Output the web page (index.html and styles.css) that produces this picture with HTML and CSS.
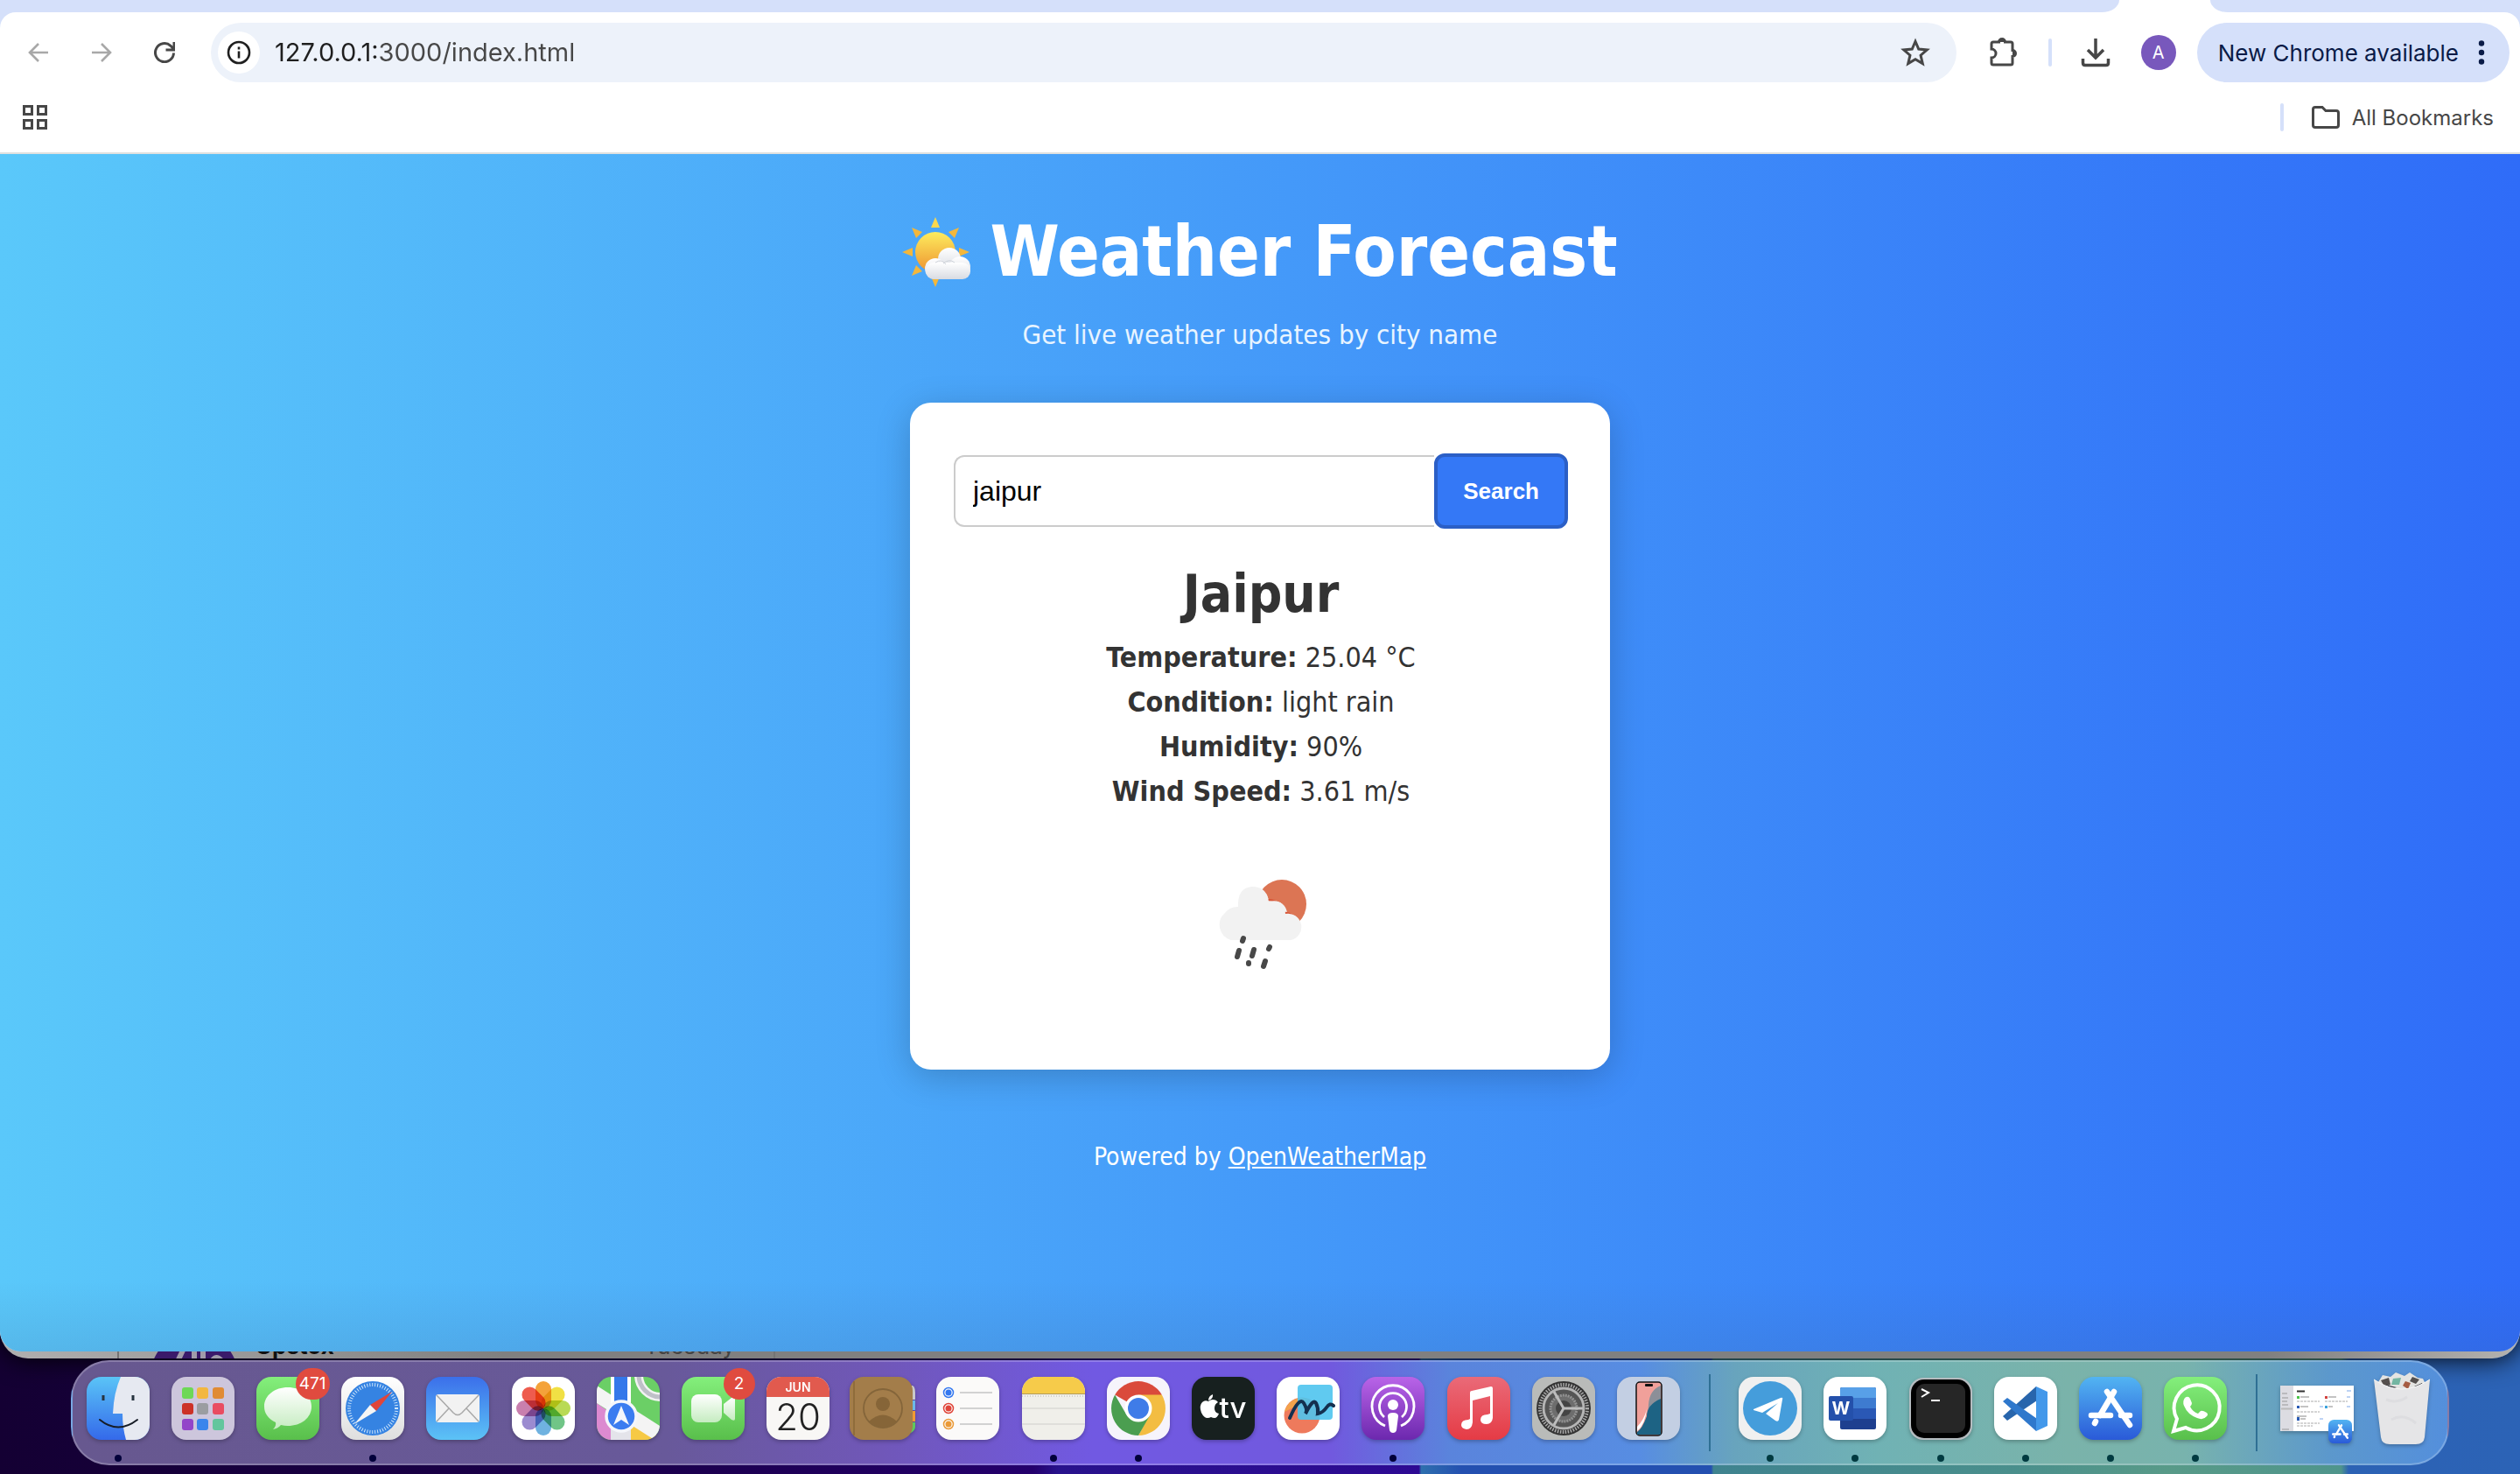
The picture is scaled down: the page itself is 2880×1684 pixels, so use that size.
FILE: index.html
```html
<!DOCTYPE html>
<html lang="en">
<head>
<meta charset="utf-8">
<meta name="viewport" content="width=device-width, initial-scale=1">
<title>Weather Forecast</title>
<link rel="stylesheet" href="styles.css">
</head>
<body>
<div class="desktop">
  <div class="back-window">
    <div class="peek" aria-hidden="true">
      <div class="peek-list">
        <span class="peek-avatar"><svg viewBox="0 0 100 100"><circle cx="50" cy="50" r="50" fill="#3a1a6a"/><path d="M42 10L26 44M50 8V46M60 8V46M66 44Q74 14 88 44" stroke="#a09caa" stroke-width="6" fill="none"/></svg></span>
        <span class="peek-name">Upstox</span>
        <span class="peek-day">Tuesday</span>
      </div>
    </div>
    <div class="browser">
      <div class="tabs"><span class="tabs-left"></span><span class="tab-active"></span><span class="tabs-right"></span></div>
      <div class="chrome-bars">
        <div class="toolbar">
          <div class="nav">
            <button class="icon-btn muted" aria-label="Back"><svg viewBox="0 0 24 24"><path d="M23 12H2M12 2L2 12l10 10"/></svg></button>
            <button class="icon-btn muted" aria-label="Forward"><svg viewBox="0 0 24 24"><path d="M1 12h21M12 2l10 10-10 10"/></svg></button>
            <button class="icon-btn" aria-label="Reload"><svg viewBox="0 0 24 24"><path d="M22.500 12.500A10.500 10.500 0 1 1 19 4.300L22 7.500M23 0v9h-9.500" stroke-width="3"/></svg></button>
          </div>
          <div class="omnibox">
            <button class="site-info" aria-label="Site information"><svg viewBox="0 0 28 28"><circle cx="14" cy="14" r="12" fill="none" stroke="#1f1f1f" stroke-width="2.600"/><path d="M14 12.500v8M14 7.500v3" stroke="#1f1f1f" stroke-width="2.600"/></svg></button>
            <input class="url" type="text" value="127.0.0.1:3000/index.html" aria-label="Address">
            <button class="star" aria-label="Bookmark this page"><svg viewBox="0 0 32 32"><path d="M16 4l3.500 8.300 9 .8-6.800 5.900 2.100 8.900L16 23.200l-7.800 4.700 2.100-8.900L3.500 13.100l9-.8z" fill="none" stroke="#474747" stroke-width="2.800"/></svg></button>
          </div>
          <div class="tools">
            <button class="tool" aria-label="Extensions"><svg viewBox="0 0 36 36"><path d="M4 8q0-2 2-2h6.500a3.500 3.500 0 0 1 7 0H26q2 0 2 2v7.500a3.500 3.500 0 0 1 0 7V30q0 2-2 2H6q-2 0-2-2v-6a5 5 0 0 0 0-10z" fill="none" stroke="#474747" stroke-width="3"/><path d="M12.500 6a3.500 3.500 0 0 1 7 0zM28 15.500a3.500 3.500 0 0 1 0 7z" fill="#474747"/></svg></button>
            <span class="bar"></span>
            <button class="tool" aria-label="Downloads"><svg viewBox="0 0 36 36"><path d="M18 2v22M9 15l9 9 9-9M3.500 25v5q0 2.500 2.500 2.500h24q2.500 0 2.500-2.500v-5" fill="none" stroke="#474747" stroke-width="3.500"/></svg></button>
            <button class="avatar" aria-label="Profile">A</button>
          </div>
          <button class="update"><span>New Chrome available</span><svg viewBox="0 0 8 28"><circle cx="4" cy="3.500" r="3.200"/><circle cx="4" cy="14" r="3.200"/><circle cx="4" cy="24.500" r="3.200"/></svg></button>
        </div>
        <div class="bookmarks">
          <button class="apps" aria-label="Apps"><svg viewBox="0 0 28 28"><path d="M1.500 1.500h9v9h-9zM17.500 1.500h9v9h-9zM1.500 17.500h9v9h-9zM17.500 17.500h9v9h-9z" fill="none" stroke="#474747" stroke-width="3"/></svg></button>
          <div class="all-marks">
            <span class="bar"></span>
            <button class="folder"><svg viewBox="0 0 32 26"><path d="M1.500 4q0-2.500 2.500-2.500h8l4 4h12q2.500 0 2.500 2.500v14q0 2.500-2.500 2.500H4q-2.500 0-2.500-2.500z" fill="none" stroke="#474747" stroke-width="3"/></svg>All Bookmarks</button>
          </div>
        </div>
      </div>
      <div class="page">
        <header class="hero">
          <h1><svg class="sun" viewBox="0 0 80 80"><defs><linearGradient id="sg" x1="0" y1="0" x2="0" y2="1"><stop offset="0" stop-color="#fdec5e"/><stop offset="1" stop-color="#ee9330"/></linearGradient><linearGradient id="cg" x1="0" y1="0" x2="0" y2="1"><stop offset="0" stop-color="#fff"/><stop offset="1" stop-color="#d8dbe2"/></linearGradient></defs><g fill="#f3b73c"><path d="M38 0l5 12H33z" fill="#fbd84f"/><path d="M38 80l5-12H33zM0 40l12-5v10zM77 40l-12-5v10zM11 12l12 5-7 7zM65 12l-12 5 7 7zM11 67l12-5-7-7z"/></g><circle cx="38" cy="40" r="23" fill="url(#sg)"/><g fill="url(#cg)"><circle cx="54" cy="48" r="13"/><circle cx="38" cy="59" r="12"/><circle cx="66" cy="57" r="12"/><rect x="27" y="52" width="51" height="19" rx="9"/></g><path d="M38 52q7-5 12 2M47 53q7-6 13-1" fill="none" stroke="#cfd3da" stroke-width="1"/></svg>Weather Forecast</h1>
          <p>Get live weather updates by city name</p>
        </header>
        <main class="card">
          <form class="search" onsubmit="return false">
            <input type="text" value="jaipur" aria-label="City name">
            <button type="submit">Search</button>
          </form>
          <section class="result">
            <h2>Jaipur</h2>
            <p><strong>Temperature:</strong> 25.04 °C</p>
            <p><strong>Condition:</strong> light rain</p>
            <p><strong>Humidity:</strong> 90%</p>
            <p><strong>Wind Speed:</strong> 3.61 m/s</p>
            <svg class="rain" viewBox="0 0 200 200" role="img" aria-label="Light rain"><circle cx="124" cy="72" r="28" fill="#dc7554"/><path d="M66 113a18 18 0 0 1-6-30a18 18 0 0 1 14-5q0-22 17-22q16 0 18 12q19-1 21 14q10 1 13 10l-9 20z" fill="#f2f2f2"/><path d="M102 69q15-7 24 12M126 82q8-1 13 6" fill="none" stroke="#d8583a" stroke-width="2"/><path d="M66 113a18 18 0 0 1-7-31a18 18 0 0 1 15-7q-1-22 16-23q17 0 19 17q18-4 19 14a15 15 0 0 1 6 30z" fill="#f2f2f2"/><path d="M80 111l-1 3M75 125l-2 7M92 124l-2 7M110 121l-1 2M86 139v1M105 137l-2 6" stroke="#484848" stroke-width="6" stroke-linecap="round"/></svg>
          </section>
        </main>
        <footer class="credit">Powered by <a href="#">OpenWeatherMap</a></footer>
      </div>
    </div>
  </div>

  <svg class="defs" width="0" height="0" aria-hidden="true"><defs>
    <linearGradient id="blue" x1="0" y1="0" x2="0" y2="1"><stop offset="0" stop-color="#5ac4f7"/><stop offset="1" stop-color="#3469ea"/></linearGradient>
    <linearGradient id="mailg" x1="0" y1="0" x2="0" y2="1"><stop offset="0" stop-color="#3b6fea"/><stop offset="1" stop-color="#5cc3f6"/></linearGradient>
    <linearGradient id="green" x1="0" y1="0" x2="0" y2="1"><stop offset="0" stop-color="#84ef7c"/><stop offset="1" stop-color="#59bf4b"/></linearGradient>
    <linearGradient id="paper" x1="0" y1="0" x2="0" y2="1"><stop offset="0" stop-color="#fff"/><stop offset="1" stop-color="#dedede"/></linearGradient>
    <linearGradient id="glass" x1="0" y1="0" x2="0" y2="1"><stop offset="0" stop-color="#fff"/><stop offset="1" stop-color="#c5ecc0"/></linearGradient>
    <linearGradient id="store" x1="0" y1="0" x2="0" y2="1"><stop offset="0" stop-color="#52b4f2"/><stop offset="1" stop-color="#2a5ad8"/></linearGradient>
    <linearGradient id="pod" x1="0" y1="0" x2="0" y2="1"><stop offset="0" stop-color="#b964e8"/><stop offset="1" stop-color="#6c28ae"/></linearGradient>
    <linearGradient id="mus" x1="0" y1="0" x2="0" y2="1"><stop offset="0" stop-color="#ea6a78"/><stop offset="1" stop-color="#e53b45"/></linearGradient>
    <clipPath id="tile"><rect width="72" height="72" rx="17"/></clipPath>
    <symbol id="astore" viewBox="0 0 72 72"><rect width="72" height="72" rx="17" fill="url(#store)"/><g stroke="#fff" stroke-width="6.500" stroke-linecap="round"><path d="M40 17L24 44M18 53l1-2"/><path d="M32 17l26 38"/><path d="M14 44h22M48 44h10"/></g></symbol>
  </defs></svg>

  <nav class="dock" aria-label="Dock">
    <button class="app running" aria-label="Finder"><svg viewBox="0 0 72 72"><g clip-path="url(#tile)"><rect width="72" height="72" fill="url(#blue)"/><path d="M39 0Q31 18 30 42h11q0 16 4 30h27V0z" fill="#e6e9f1"/></g><path d="M19 21v6M53 21v6" stroke="#27333f" stroke-width="3"/><path d="M15 49q21 17 43 0" fill="none" stroke="#161c26" stroke-width="2" stroke-linecap="round"/></svg></button>
    <button class="app" aria-label="Launchpad"><svg viewBox="0 0 72 72"><rect width="72" height="72" rx="17" fill="#cdc6dc"/><rect x="12" y="12" width="13" height="13" rx="3" fill="#6dd856"/><rect x="29" y="12" width="13" height="13" rx="3" fill="#f2b740"/><rect x="47" y="12" width="13" height="13" rx="3" fill="#e08b35"/><rect x="12" y="30" width="13" height="13" rx="3" fill="#cc3127"/><rect x="29" y="30" width="13" height="13" rx="3" fill="#9b9da1"/><rect x="47" y="30" width="13" height="13" rx="3" fill="#e94c61"/><rect x="12" y="48" width="13" height="13" rx="3" fill="#9345c9"/><rect x="29" y="48" width="13" height="13" rx="3" fill="#3b85ec"/><rect x="47" y="48" width="13" height="13" rx="3" fill="#62c69d"/></svg></button>
    <button class="app" aria-label="Messages"><svg viewBox="0 0 72 72"><rect width="72" height="72" rx="17" fill="url(#green)"/><path d="M36 12c15 0 27 9 27 22s-12 22-27 22q-4 0-8-1-3 4-9 5 4-4 3-8C14 48 9 42 9 34c0-13 12-22 27-22z" fill="url(#glass)"/></svg><span class="badge">471</span></button>
    <button class="app running" aria-label="Safari"><svg viewBox="0 0 72 72"><rect width="72" height="72" rx="17" fill="url(#paper)"/><circle cx="36" cy="36" r="31" fill="#3583e2"/><circle cx="36" cy="36" r="27" fill="none" stroke="#cfe6fb" stroke-width="4" stroke-dasharray="1 2"/><path d="M58 17L40 39 33 32z" fill="#e0453a"/><path d="M15 54l18-22 7 7z" fill="#f5f5f5"/></svg></button>
    <button class="app" aria-label="Mail"><svg viewBox="0 0 72 72"><rect width="72" height="72" rx="17" fill="url(#mailg)"/><rect x="11" y="20" width="50" height="32" rx="3" fill="#f2f2f2"/><path d="M12 51l14-15M60 51L46 36M12 21l19 20q5 5 10 0l19-20" fill="none" stroke="#a9a9a9" stroke-width="1.500"/></svg></button>
    <button class="app" aria-label="Photos"><svg viewBox="0 0 72 72"><rect width="72" height="72" rx="17" fill="#fff"/><g class="petals"><rect x="27" y="5" width="18" height="31" rx="9" fill="#f4a23a"/><rect x="27" y="5" width="18" height="31" rx="9" fill="#f1e044" transform="rotate(45 36 36)"/><rect x="27" y="5" width="18" height="31" rx="9" fill="#b9da55" transform="rotate(90 36 36)"/><rect x="27" y="5" width="18" height="31" rx="9" fill="#70c587" transform="rotate(135 36 36)"/><rect x="27" y="5" width="18" height="31" rx="9" fill="#6fb2e0" transform="rotate(180 36 36)"/><rect x="27" y="5" width="18" height="31" rx="9" fill="#9b8bd0" transform="rotate(225 36 36)"/><rect x="27" y="5" width="18" height="31" rx="9" fill="#c97fae" transform="rotate(270 36 36)"/><rect x="27" y="5" width="18" height="31" rx="9" fill="#ee5c4e" transform="rotate(315 36 36)"/></g></svg></button>
    <button class="app" aria-label="Maps"><svg viewBox="0 0 72 72"><g clip-path="url(#tile)"><rect width="72" height="72" fill="#6bcf66"/><path d="M0 30l20 14v28H0z" fill="#dc8ad0"/><path d="M38 72V48l34 20v4z" fill="#f6c945"/><path d="M0 10l72 46v16H66L0 30z" fill="#f4f4f4"/><path d="M16 40h23v32H16z" fill="#e4e4ea"/><path d="M16 0h23v40H16z" fill="#fff"/><path d="M20 0h15v40H20z" fill="#3478ea"/><circle cx="73" cy="-2" r="25" fill="none" stroke="#f2f2f2" stroke-width="10"/><circle cx="73" cy="-2" r="25" fill="none" stroke="#bfc0c8" stroke-width="5"/></g><circle cx="28" cy="45" r="17" fill="#3b7cf0" stroke="#f4f6fb" stroke-width="3.500"/><path d="M28 33l9 22-9-6-9 6z" fill="#f4f6fb"/></svg></button>
    <button class="app" aria-label="FaceTime"><svg viewBox="0 0 72 72"><rect width="72" height="72" rx="17" fill="url(#green)"/><rect x="11" y="20" width="35" height="32" rx="8" fill="url(#glass)"/><path d="M48 31l9-7q4-2 4 1v23q0 3-4 1l-9-8z" fill="url(#glass)"/></svg><span class="badge">2</span></button>
    <button class="app" aria-label="Calendar"><svg viewBox="0 0 72 72"><g clip-path="url(#tile)"><rect width="72" height="72" fill="#f8f7f5"/><rect width="72" height="23" fill="#e15a4e"/></g><text x="36" y="17" class="t jun">JUN</text><text x="36" y="61" class="t day">20</text></svg></button>
    <button class="app" aria-label="Contacts"><svg viewBox="0 0 76 72"><path d="M66 10h6q3 2 3 8v8h-9z" fill="#c9c9c9"/><path d="M66 27h9v11h-9z" fill="#6cb8e8"/><path d="M66 39h9v12h-9z" fill="#f09a33"/><path d="M66 52h9v5q0 4-5 7h-4z" fill="#5fc85c"/><rect width="72" height="72" rx="16" fill="#a37d4a"/><path d="M5 5v62" stroke="#886737" stroke-width="1.500"/><circle cx="38" cy="36" r="22" fill="none" stroke="#84653a" stroke-width="1.800"/><circle cx="38" cy="31" r="8" fill="#866538"/><path d="M22 51q16-15 32 0-16 14-32 0z" fill="#866538"/></svg></button>
    <button class="app" aria-label="Reminders"><svg viewBox="0 0 72 72"><rect width="72" height="72" rx="17" fill="#fbfaf9"/><g fill="none" stroke-width="1.500"><circle cx="14" cy="18" r="5.500" stroke="#3478f0"/><circle cx="14" cy="36" r="5.500" stroke="#e0453a"/><circle cx="14" cy="54" r="5.500" stroke="#ea9a38"/></g><circle cx="14" cy="18" r="3.500" fill="#3478f0"/><circle cx="14" cy="36" r="3.500" fill="#e0453a"/><circle cx="14" cy="54" r="3.500" fill="#ea9a38"/><path d="M27 18h37M27 36h37M27 54h37" stroke="#c5c5c5" stroke-width="1.600"/></svg></button>
    <button class="app running" aria-label="Notes"><svg viewBox="0 0 72 72"><g clip-path="url(#tile)"><rect width="72" height="72" fill="#f0efea"/><rect width="72" height="19" fill="#f6cb4a"/><path d="M0 19.500h72" stroke="#b39a5a"/><path d="M0 22h72" stroke="#b5b5b0" stroke-dasharray="1 2"/><path d="M0 36h72M0 54h72" stroke="#cfcecb"/></g></svg></button>
    <button class="app running" aria-label="Chrome"><svg viewBox="0 0 72 72"><rect width="72" height="72" rx="17" fill="#f6f4fb"/><path d="M36 36L9.200 20.500A31 31 0 0 1 62.800 20.500z" fill="#da4a3b"/><path d="M36 20.500H62.800A31 31 0 0 1 36 67L49 43z" fill="#f3bd42"/><path d="M9.200 20.500A31 31 0 0 0 36 67L49.500 43.500 22.500 43.500z" fill="#4b9e50"/><circle cx="36" cy="36" r="15.500" fill="#fff"/><circle cx="36" cy="36" r="12" fill="#3f7ce8"/></svg></button>
    <button class="app" aria-label="Apple TV"><svg viewBox="0 0 72 72"><rect width="72" height="72" rx="17" fill="#17201f"/><path d="M20 29q2-2 5-2 4 0 6 3-4 2-4 7t5 6q-2 5-5 5-2 0-4-1-2 1-4 1-4 0-7-6-3-8 1-12 3-3 7-1zM20 28q0-5 5-7 1 5-5 7z" fill="#fff" transform="translate(-1 -1)"/><text x="47" y="47" class="t tv">tv</text></svg></button>
    <button class="app" aria-label="Freeform"><svg viewBox="0 0 72 72"><rect width="72" height="72" rx="17" fill="#fff"/><circle cx="29" cy="44" r="20.500" fill="#ee7a5c"/><path d="M9 40a20 20 0 0 1 28-14z" fill="#f3a24b"/><rect x="24" y="9" width="40" height="40" rx="4" fill="#4fc4ee" opacity=".9"/><path d="M15 47Q26 22 31 30T33 42Q42 24 45 30T47 42Q53 41 57 35T65 33" fill="none" stroke="#14304f" stroke-width="4" stroke-linecap="round"/></svg></button>
    <button class="app running" aria-label="Podcasts"><svg viewBox="0 0 72 72"><rect width="72" height="72" rx="17" fill="url(#pod)"/><g fill="none" stroke="#fff" stroke-width="2.800"><path d="M27 56a24 24 0 1 1 18 0"/><path d="M26 46a15.500 15.500 0 1 1 20 0"/></g><circle cx="36" cy="32" r="6" fill="#fff"/><path d="M30 45q0-4 6-4t6 4l-2 16q-1 3-4 3t-4-3z" fill="#fff"/></svg></button>
    <button class="app" aria-label="Music"><svg viewBox="0 0 72 72"><rect width="72" height="72" rx="17" fill="url(#mus)"/><path d="M26 18q0-2 2-2l22-5q2 0 2 2v34q-1 7-7 7-7 0-7-5 0-6 8-6l3-1V22l-20 5v25q-1 8-7 8-6-1-6-5 0-6 8-6l2-1z" fill="#fff"/></svg></button>
    <button class="app" aria-label="System Settings"><svg viewBox="0 0 72 72"><rect width="72" height="72" rx="17" fill="#b9bbb9"/><circle cx="36" cy="36" r="31" fill="#333"/><circle cx="36" cy="36" r="27" fill="none" stroke="#aaa" stroke-width="4" stroke-dasharray="1.500 1.500"/><circle cx="36" cy="36" r="23" fill="#555" stroke="#b5b5b5" stroke-width="3"/><circle cx="36" cy="36" r="15" fill="#6d6d6d" stroke="#929292" stroke-width="3" stroke-dasharray="2 1"/><circle cx="36" cy="36" r="9" fill="#444"/><path d="M36 36h22M36 36L25 17M36 36L25 55" stroke="#bdbdbd" stroke-width="3"/></svg></button>
    <button class="app" aria-label="iPhone Mirroring"><svg viewBox="0 0 72 72"><rect width="72" height="72" rx="17" fill="#c3cfe3"/><rect x="22" y="6" width="29" height="61" rx="4" fill="#f0a09a" stroke="#111" stroke-width="1.500"/><path d="M50 10q-13 5-14 22l-1 12 15-10z" fill="#8c8f98"/><path d="M50 25Q34 32 34 45q-5 14-11 18v3h27z" fill="#1d6384"/><path d="M34 37q-3 12-11 20v5q9-7 11-25z" fill="#fff"/><rect x="32" y="8" width="9" height="3" rx="1" fill="#111"/></svg></button>
    <span class="divider"></span>
    <button class="app running" aria-label="Telegram"><svg viewBox="0 0 72 72"><rect width="72" height="72" rx="17" fill="#f0f0f0"/><circle cx="36" cy="36" r="31" fill="#459ddb"/><path d="M17 37l31-13q3-1 2 2l-4 23q-1 3-4 1L31 42l14-12-18 11-10-3z" fill="#fff"/></svg></button>
    <button class="app running" aria-label="Word"><svg viewBox="0 0 72 72"><rect width="72" height="72" rx="17" fill="#fff"/><rect x="19" y="12" width="41" height="48" rx="2" fill="#1e3f8f"/><path d="M19 36h41v12H19z" fill="#2a58b5"/><path d="M19 24h41v12H19z" fill="#3e7bd0"/><path d="M19 14q0-2 2-2h37q2 0 2 2v10H19z" fill="#58a0e8"/><rect x="6" y="22" width="28" height="28" rx="2" fill="#2450ab"/><text x="20" y="43" class="t word">W</text></svg></button>
    <button class="app running" aria-label="Terminal"><svg viewBox="0 0 72 72"><rect y="1" width="72" height="71" rx="16" fill="#b5bcc0"/><rect x="2" y="3" width="68" height="67" rx="15" fill="#000"/><rect x="8" y="8" width="56" height="56" rx="9" fill="#262626"/><path d="M14 14l8 4-8 5" fill="none" stroke="#fff" stroke-width="2"/><path d="M25 27h10" stroke="#fff" stroke-width="2"/></svg></button>
    <button class="app running" aria-label="Visual Studio Code"><svg viewBox="0 0 72 72"><rect width="72" height="72" rx="17" fill="#fff"/><path d="M10 45l38-34 4 14-37 25z" fill="#2865ac"/><path d="M10 28l5-4 37 26-4 12z" fill="#2f78cc"/><path d="M48 11l13 6v39l-13 6z" fill="#4398ea"/></svg></button>
    <button class="app running" aria-label="App Store"><svg viewBox="0 0 72 72"><use href="#astore"/></svg></button>
    <button class="app running" aria-label="WhatsApp"><svg viewBox="0 0 72 72"><rect width="72" height="72" rx="17" fill="url(#green)"/><path d="M11 62l4-14a26 26 0 1 1 10 10z" fill="none" stroke="#fff" stroke-width="4"/><path d="M24 24q4-3 6 1l2 5q0 2-2 4 3 6 9 8l3-3q2-1 7 2 2 2 0 4-4 5-11 2-11-4-15-14-2-5 1-9z" fill="#fff"/></svg></button>
    <span class="divider"></span>
    <button class="app" aria-label="App Store window"><svg class="thumb" viewBox="0 0 84 72"><rect y="10" width="84" height="52" fill="#fff"/><rect y="10" width="15" height="52" fill="#dcdce2"/><path d="M2 19h6M2 24h7M2 28h6M2 32h7M2 60h8" stroke="#999"/><path d="M1 36.500h13" stroke="#bbb" stroke-width="2"/><path d="M19 16.500h9" stroke="#333" stroke-width="2"/><path d="M23 23h10M55 23h9M23 34h9M55 34h5M19 45h11M23 48h6" stroke="#888"/><path d="M19 28h26M51 28h26M19 40h26M19 53h26M19 56h18" stroke="#aaa" stroke-dasharray="3 1"/><path d="M76 16h5M76 23h4M76 34h4M45 34h4M45 48h4" stroke="#7fa8ea"/><path d="M19 22h3v3h-3z" fill="#4cc44a"/><path d="M51 22h3v3h-3z" fill="#d24340"/><path d="M19 33h3v3h-3zM19 46h3v4h-3z" fill="#2a5ab5"/><path d="M51 33h3v3h-3z" fill="#3ba2dc"/><use href="#astore" x="55" y="49" width="27" height="27"/></svg></button>
    <button class="app" aria-label="Trash"><svg class="trash" viewBox="0 0 64 84"><path d="M5 12l5-8 9 2 6-5 10 4 6-4 9 6 6 1 5 10-5 8H8z" fill="#e4e4e2"/><path d="M8 10l9-3 2 8-7 2zM44 6l8 3-4 5-7-3z" fill="#55504e"/><path d="M22 8l9-1-2 8h-9z" fill="#73b6a2"/><path d="M36 11l6 2-3 7-6-4z" fill="#a65d43"/><path d="M14 15l12 3-6 2zM46 17l9-4 2 5z" fill="#3c3d44"/><path d="M0 9q32 22 64 0l-6 66q-1 8-10 8H18q-9 0-10-8z" fill="#e5e5e7"/><path d="M0 9q32 22 64 0" fill="none" stroke="#f8f8f8"/><path d="M14 32q12 5 24-3M20 55q14-8 28 4" stroke="#dddde0" stroke-width="3" fill="none"/></svg></button>
  </nav>
</div>
</body>
</html>
```
FILE: styles.css
```css
* { box-sizing: border-box; }

body {
  margin: 0;
  font-family: Inter, "Liberation Sans", sans-serif;
  color: #1f1f1f;
}

button {
  border: 0;
  padding: 0;
  background: none;
  font: inherit;
  color: inherit;
}

svg { display: block; }

.defs { position: absolute; }

.desktop {
  min-height: 100vh;
  display: flex;
  flex-direction: column;
  background:
    linear-gradient(to right, #140033 0%, #1c0050 28%, #24006c 41%, #28128c 42%, #2d0a93 56.300%, #2e6fae 56.400%, #2450b0 58%, #2450b0 67.900%, #3f838f 68%, #4a8f8c 80%, #589a88 86%, #4f958c 92.900%, #2c62b4 93.200%, #2c63b6 100%);
}

/* Window that sits behind the browser */
.back-window {
  position: relative;
  z-index: 0;
  flex: 1;
  display: flex;
  padding-bottom: 8px;
  border-radius: 0 0 32px 32px;
  background: linear-gradient(to right, #b0b0b0, #808080 20%, #808080 90%, #b5b3b0);
  box-shadow: 0 0 30px #000;
}

.peek {
  position: absolute;
  inset: auto 0 0 0;
  height: 40px;
  overflow: hidden;
}

.peek-list {
  width: 752px;
  height: 40px;
  margin-left: 134px;
  padding-right: 44px;
  display: flex;
  border: solid #747474;
  border-width: 0 2px;
}

.peek-avatar {
  width: 100px;
  margin: 10px 20px 0 36px;
}

.peek-name,
.peek-day {
  font-size: 26px;
  line-height: 52px;
}

.peek-name { font-weight: 700; color: #111; }
.peek-day { margin-left: auto; color: #444; }

/* Browser */
.browser {
  position: relative;
  flex: 1;
  display: flex;
  flex-direction: column;
  overflow: hidden;
  border-radius: 0 0 24px 24px;
  background: #d5e0fa;
}

.tabs {
  height: 14px;
  display: flex;
  background: #fff;
}

.tabs-left,
.tabs-right { background: #d5e0fa; }

.tabs-left { flex: 1; border-bottom-right-radius: 20px 14px; }
.tabs-right { width: 354px; border-bottom-left-radius: 20px 14px; }
.tab-active { width: 104px; }

.chrome-bars {
  border-radius: 18px 18px 0 0;
  border-bottom: 2px solid #dfe1e0;
  background: #fff;
}

.toolbar {
  display: flex;
  align-items: center;
  padding: 12px 12px 0 32px;
}

.nav {
  display: flex;
  gap: 48px;
  margin-right: 41px;
}

.icon-btn { width: 24px; height: 24px; }

.icon-btn svg {
  fill: none;
  stroke: #474747;
  stroke-width: 2.600;
}

.muted svg { stroke: #a8a8a8; }

.omnibox {
  flex: 1;
  height: 68px;
  display: flex;
  align-items: center;
  padding: 0 30px 0 8px;
  border-radius: 34px;
  background: #edf2fa;
}

.site-info {
  width: 48px;
  height: 48px;
  display: grid;
  place-items: center;
  border-radius: 50%;
  background: #fff;
}

.site-info svg { width: 28px; }

.url {
  flex: 1;
  min-width: 0;
  margin-left: 17px;
  padding: 0;
  border: 0;
  outline: 0;
  font: 29px/36px Inter, sans-serif;
  color: transparent;
  background: linear-gradient(to right, #1f1f1f 119px, #474747 119px);
  background-clip: text;
}

.star svg { width: 34px; }

.tools {
  display: flex;
  align-items: center;
  margin: 0 24px 0 36px;
}

.tool svg { width: 36px; }

.bar {
  width: 4px;
  height: 32px;
  border-radius: 2px;
  background: #d5e0fa;
}

.tools .bar { margin: 0 32px 0 33px; }

.avatar {
  width: 40px;
  height: 40px;
  margin-left: 34px;
  border-radius: 50%;
  background: #7858bc;
  color: #fff;
  font-size: 20px;
}

.update {
  height: 68px;
  display: flex;
  align-items: center;
  gap: 22px;
  padding: 0 28px 0 24px;
  border-radius: 34px;
  background: #d5e0fa;
  color: #0a1b47;
  fill: #0a1b47;
  font-size: 26px;
}

.update svg { width: 8px; }

.bookmarks {
  height: 80px;
  display: flex;
  align-items: center;
  justify-content: space-between;
  padding: 0 30px 0 26px;
}

.apps svg { width: 28px; }

.all-marks {
  display: flex;
  align-items: center;
  gap: 32px;
}

.folder {
  display: flex;
  align-items: center;
  gap: 14px;
  font-size: 24px;
  color: #474747;
}

.folder svg { width: 32px; }

/* Weather page */
.page {
  flex: 1;
  display: flex;
  flex-direction: column;
  align-items: center;
  padding: 64px 32px;
  background:
    linear-gradient(to top, rgba(60, 90, 140, .150), transparent 80px),
    linear-gradient(to right, #5ac8fa, #2f6cf8);
  font-family: "DejaVu Sans Condensed", "DejaVu Sans", sans-serif;
  color: #fff;
}

.hero { text-align: center; }

.hero h1 {
  display: flex;
  justify-content: center;
  align-items: center;
  gap: 20px;
  margin: 0 0 24px;
  font-size: 80px;
  line-height: 96px;
}

.sun { width: 80px; }

.hero p {
  margin: 0 0 56px;
  font-size: 31px;
  line-height: 44px;
  color: #e8f4ff;
}

.card {
  width: 100%;
  max-width: 800px;
  padding: 58px 48px 61px 50px;
  border-radius: 24px;
  background: #fff;
  box-shadow: 0 8px 40px rgba(0, 0, 0, .200);
  color: #333;
}

.search {
  display: flex;
  align-items: center;
}

.search input {
  flex: 1;
  min-width: 0;
  height: 82px;
  padding: 0 20px;
  border: 2px solid #ccc;
  border-right: 0;
  border-radius: 12px 0 0 12px;
  font: 32px "Liberation Sans", Arial, sans-serif;
  color: #000;
}

.search button {
  height: 86px;
  padding: 0 29px;
  border: 4px solid #2b5fc6;
  border-radius: 12px;
  background: #3478f6;
  color: #fff;
  font: bold 26px "Liberation Sans", Arial, sans-serif;
}

.result {
  padding-top: 40px;
  text-align: center;
}

.result h2 {
  margin: 0 0 14px;
  font-size: 60px;
  line-height: 68px;
}

.result p {
  margin: 0;
  font-size: 32px;
  line-height: 51px;
}

.rain {
  width: 200px;
  margin: 31px auto 0;
}

.credit {
  margin-top: 80px;
  font-size: 28px;
  line-height: 40px;
}

.credit a { color: #fff; }

/* Dock */
.dock {
  position: relative;
  height: 120px;
  display: flex;
  align-items: center;
  margin: 2px 81px 10px;
  padding: 0 3px;
  border: 2px solid rgba(255, 255, 255, .220);
  border-radius: 44px;
  background: linear-gradient(to right, #67588f 0%, #68599a 25%, #7057b8 34%, #7159e2 43%, #7159de 53%, #5a84dc 58%, #578de2 66%, #68a4bd 70%, #70b2b4 76%, #7ab3aa 84%, #78b3ad 89%, #5c98cc 95%, #548fdc 100%);
}

.app {
  position: relative;
  flex: 1 1 0;
  min-width: 0;
  height: 116px;
  padding-bottom: 10px;
  display: grid;
  place-items: center;
}

.app svg {
  height: 72px;
  filter: drop-shadow(0 2px 2px rgba(0, 0, 0, .250));
}

.app .trash { height: 84px; width: 64px; }

.app .thumb { overflow: visible; }

.running::after {
  content: "";
  position: absolute;
  bottom: 2px;
  left: 50%;
  width: 8px;
  height: 8px;
  margin-left: -4px;
  border-radius: 50%;
  background: #02003a;
}

.divider ~ .running::after { background: #003a40; }

.badge {
  position: absolute;
  top: 7px;
  right: 1px;
  min-width: 36px;
  height: 36px;
  padding: 0 4px;
  border-radius: 18px;
  background: #e04b3f;
  color: #fff;
  font-size: 19px;
  line-height: 36px;
  text-align: center;
}

.divider {
  flex: 0 0 2px;
  height: 88px;
  margin: 0 20px;
  background: #2f6f94;
}

.petals rect { mix-blend-mode: multiply; }

.t { text-anchor: middle; font-family: Inter, sans-serif; }
.jun { font-size: 14px; font-weight: 600; fill: #fff; }
.day { font-size: 42px; font-weight: 300; fill: #222; }
.tv { font-size: 33px; font-weight: 500; fill: #fff; }
.word { font-size: 20px; font-weight: 700; fill: #fff; }
```
